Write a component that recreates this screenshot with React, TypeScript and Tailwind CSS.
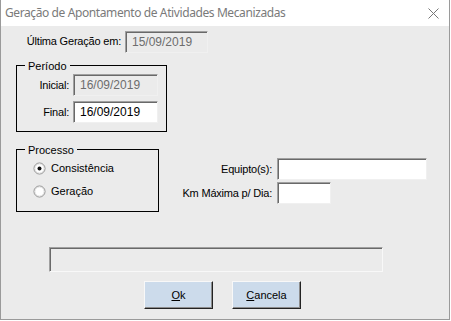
import React from "react";

const ui = { fontFamily: '"Liberation Sans", Arial, sans-serif' };

// caixa de texto afundada estilo Windows
const Campo = ({ value, disabled, w }: { value?: string; disabled?: boolean; w: string }) => (
  <div
    className={`${w} h-[22px] flex items-center pl-[6px] text-[12px] border border-t-[#a0a0a0] border-l-[#a0a0a0] border-r-[#f0f0f0] border-b-[#f0f0f0] shadow-[inset_1px_1px_0_#696969] ${
      disabled ? "bg-[#ebebeb] text-[#6d6d6d]" : "bg-white text-black"
    }`}
  >
    {value}
  </div>
);

const Radio = ({ checked, label }: { checked?: boolean; label: string }) => (
  <div className="flex items-center h-[13px]">
    <svg width="13" height="13" viewBox="0 0 13 13">
      <circle cx="6.5" cy="6.5" r="5.5" fill="#fff" stroke="#8a8a8a" />
      <circle cx="6.5" cy="6.5" r="4.5" fill="none" stroke="#e3e3e3" />
      {checked && <circle cx="6.5" cy="6.5" r="2" fill="#111" />}
    </svg>
    <span className="ml-[5px] text-[11px] text-black">{label}</span>
  </div>
);

const Botao = ({ hot, rest }: { hot: string; rest: string }) => (
  <button className="w-[69px] h-[28px] bg-[#ccdbeb] border border-t-[#f8f8f8] border-l-[#f8f8f8] border-r-[#222] border-b-[#222] shadow-[inset_-1px_-1px_0_#8c8c8c] text-[11px] text-black">
    <span className="underline">{hot}</span>
    {rest}
  </button>
);

const Rotulo = ({ w, children }: { w: string; children: React.ReactNode }) => (
  <span className={`${w} flex justify-end whitespace-nowrap text-[11px] tracking-[-0.2px] text-black`}>{children}</span>
);

export default function App() {
  return (
    <div className="w-[451px] h-[321px] bg-white" style={ui}>
      <div className="w-[450px] h-[320px] border-x border-b border-[#9a9a9a] flex flex-col">
        {/* Barra de titulo */}
        <div className="h-[26px] bg-white flex items-center justify-between pl-[4px] pr-[10px]">
          <span
            className="text-[12px] tracking-[-0.4px] text-[#7a7a7a]"
            style={{ fontFamily: '"Noto Sans", "Open Sans", sans-serif' }}
          >
            Geração de Apontamento de Atividades Mecanizadas
          </span>
          <svg width="11" height="11" viewBox="0 0 11 11">
            <path d="M0.5 0.5 L10.5 10.5 M10.5 0.5 L0.5 10.5" stroke="#777" strokeWidth="1" />
          </svg>
        </div>

        {/* Corpo */}
        <div className="flex-1 bg-[#ebebeb] flex flex-col">
          <div className="flex items-center mt-[4px] ml-[24px] h-[23px]">
            <Rotulo w="w-[96px]">Última Geração em:</Rotulo>
            <div className="ml-[4px]">
              <Campo w="w-[83px]" value="15/09/2019" disabled />
            </div>
          </div>

          {/* Periodo */}
          <div className="relative mt-[12px] ml-[15px] w-[151px] h-[67px] border border-black">
            <span className="absolute -top-[8px] left-[8px] px-[3px] bg-[#ebebeb] text-[11px] text-black">
              Período
            </span>
            <div className="flex items-center mt-[8px]">
              <Rotulo w="w-[52px]">Inicial:</Rotulo>
              <div className="ml-[4px]">
                <Campo w="w-[85px]" value="16/09/2019" disabled />
              </div>
            </div>
            <div className="flex items-center mt-[5px]">
              <Rotulo w="w-[52px]">Final:</Rotulo>
              <div className="ml-[4px]">
                <Campo w="w-[85px]" value="16/09/2019" />
              </div>
            </div>
          </div>

          {/* Processo + campos */}
          <div className="flex mt-[17px] ml-[15px]">
            <div className="relative w-[143px] h-[63px] border border-black">
              <span className="absolute -top-[8px] left-[8px] px-[3px] bg-[#ebebeb] text-[11px] text-black">
                Processo
              </span>
              <div className="flex flex-col gap-[10px] mt-[12px] ml-[16px]">
                <Radio checked label="Consistência" />
                <Radio label="Geração" />
              </div>
            </div>
            <div className="flex flex-col gap-[2px] mt-[9px]">
              <div className="flex items-center">
                <Rotulo w="w-[113px]">Equipto(s):</Rotulo>
                <div className="ml-[5px]">
                  <Campo w="w-[150px]" />
                </div>
              </div>
              <div className="flex items-center">
                <Rotulo w="w-[113px]">Km Máxima p/ Dia:</Rotulo>
                <div className="ml-[5px]">
                  <Campo w="w-[54px]" />
                </div>
              </div>
            </div>
          </div>

          {/* Progresso */}
          <div className="mt-[35px] ml-[48px] w-[334px] h-[25px] border border-t-[#a0a0a0] border-l-[#a0a0a0] border-r-[#f8f8f8] border-b-[#f8f8f8] shadow-[inset_1px_1px_0_#696969] bg-[#ebebeb]" />

          {/* Botoes */}
          <div className="flex mt-[9px] ml-[143px] gap-[19px]">
            <Botao hot="O" rest="k" />
            <Botao hot="C" rest="ancela" />
          </div>
        </div>
      </div>
    </div>
  );
}
